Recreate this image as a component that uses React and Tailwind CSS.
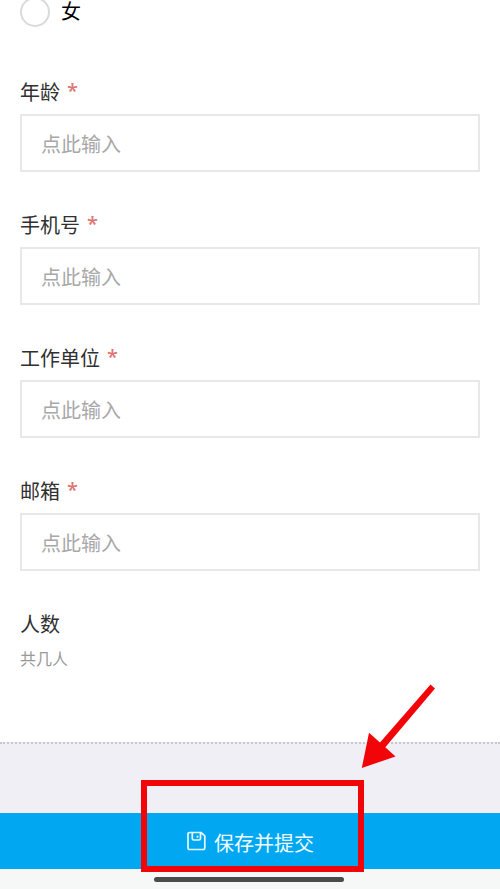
const fields = ["年龄", "手机号", "工作单位", "邮箱"];

function Field({ label }) {
  return (
    <div className="mb-[38px]">
      <label className="flex h-[30px] text-[20px] leading-[30px] text-[#303030]">
        {label}
        <span className="ml-[7px] font-['Noto_Sans',sans-serif] text-[20px] font-medium leading-[28px] text-[#df7474]">*</span>
      </label>
      <div className="mt-[7px] flex h-[58px] items-center border-2 border-[#e8e8e8] pl-[19px] pt-px text-[20px] leading-[30px] text-[#a8a8a8]">
        点此输入
      </div>
    </div>
  );
}

function SaveIcon() {
  return (
    <svg className="mb-[3px] h-5 w-5" viewBox="0 0 20 20" fill="none" stroke="#e6fbff" strokeWidth="1.7" strokeLinejoin="round">
      <path d="M3.7 1.5H15L18.8 4.8V16.8Q18.8 18.5 17.1 18.5H3.7Q2 18.5 2 16.8V3.2Q2 1.5 3.7 1.5Z" />
      <path d="M6.3 1.5V7.5Q6.3 9 7.8 9H13Q14.5 9 14.5 7.5V1.5" />
      <path d="M11.5 4.7V6.7" />
    </svg>
  );
}

export default function App() {
  return (
    <div className="relative flex h-[889px] w-[500px] flex-col overflow-hidden bg-[#f6f8f8] font-['Noto_Sans_CJK_SC',sans-serif]">
      <main className="h-[742px] shrink-0 bg-white px-5">
        <div className="flex h-[77px] items-start">
          <span className="-mt-[3px] h-[30px] w-[30px] rounded-full border-2 border-[#dadada]" />
          <span className="ml-[11px] text-[20px] leading-[22px] text-black">女</span>
        </div>
        {fields.map((label) => (
          <Field key={label} label={label} />
        ))}
        <div className="text-[20px] leading-[30px] text-[#303030]">人数</div>
        <div className="mt-[7px] text-[16px] leading-6 text-[#999]">共几人</div>
      </main>
      <div className="h-[71px] shrink-0 border-t-2 border-dotted border-[#c8c8cc] bg-[#f0eff5]" />
      <button className="flex h-[56px] w-full shrink-0 items-center justify-center gap-2 bg-[#02a7f2] pt-[3px] text-[20px] leading-[30px] text-[#f0fcff]">
        <SaveIcon />
        保存并提交
      </button>
      <div className="ml-[154px] mt-2 h-[5px] w-[190px] rounded-full bg-[#4b4b4b]" />
      <div className="absolute left-[141px] top-[780px] h-[92px] w-[223px] border-[6px] border-[#f20509]" />
      <svg className="absolute left-[355px] top-[680px] h-[95px] w-[85px]" viewBox="355 680 85 95">
        <path d="M430.5 684.5L435 688.5L385.3 747.2L395.5 756.5L361.8 768L369 732.8L380 742.5Z" fill="#f20509" />
      </svg>
    </div>
  );
}
